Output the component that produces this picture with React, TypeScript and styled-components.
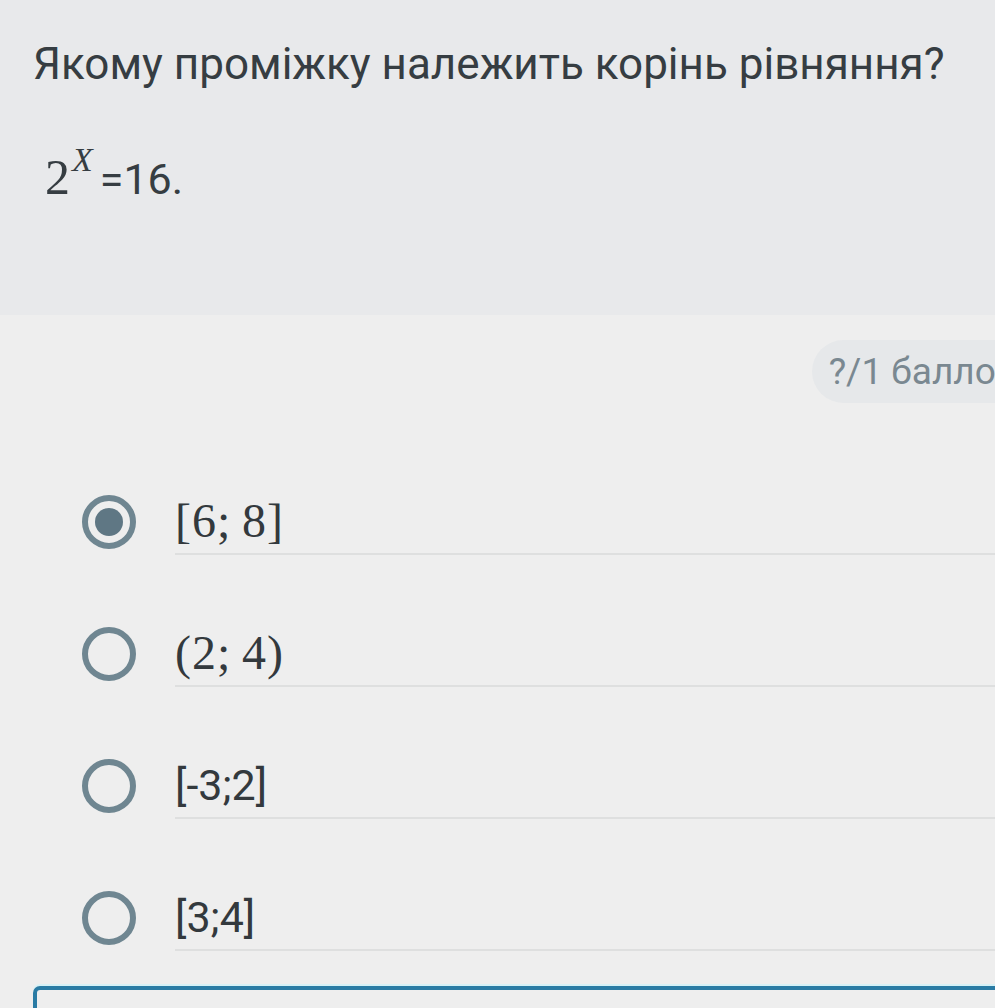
import { createGlobalStyle } from "styled-components";
import styled from "styled-components";

const GlobalStyle = createGlobalStyle`
  html, body {
    margin: 0;
    padding: 0;
    background: #eeeeee;
    overflow: hidden;
  }
  body {
    font-family: Roboto, "Liberation Sans", sans-serif;
    color: #363d42;
  }
`;

const options = [
  { label: "[6;\u20098]", math: true, checked: true },
  { label: "(2;\u20094)", math: true, checked: false },
  { label: "[-3;2]", math: false, checked: false },
  { label: "[3;4]", math: false, checked: false },
];

export default function App() {
  return (
    <Page>
      <GlobalStyle />
      <Header>
        <Title>Якому проміжку належить корінь рівняння?</Title>
        <Equation>
          <MathNum>2</MathNum>
          <MathSup>X</MathSup>
          <span>=16.</span>
        </Equation>
      </Header>

      <ScoreRow>
        <ScorePill>?/1 баллов</ScorePill>
      </ScoreRow>

      <Options>
        {options.map((o, i) => (
          <OptionRow key={i}>
            <Radio $checked={o.checked} />
            <OptionLabel $math={o.math}>{o.label}</OptionLabel>
          </OptionRow>
        ))}
      </Options>

      <AnswerBox />
    </Page>
  );
}

const Page = styled.div`
  display: flex;
  flex-direction: column;
  width: 100%;
  min-height: 1008px;
`;

const Header = styled.div`
  box-sizing: border-box;
  height: 315px;
  padding: 39px 33px 0;
  background: #e8e9eb;
`;

const Title = styled.h1`
  margin: 0;
  font-size: 44px;
  font-weight: 400;
  line-height: 50px;
  color: #363d42;
  white-space: nowrap;
`;

const Equation = styled.div`
  margin-top: 54px;
  padding-left: 12px;
  font-size: 43px;
  line-height: 60px;
  height: 60px;
  white-space: nowrap;
`;

const MathNum = styled.span`
  font-family: "Liberation Serif", "DejaVu Serif", serif;
  font-size: 50px;
  line-height: 1;
`;

const MathSup = styled.span`
  font-family: "Liberation Serif", "DejaVu Serif", serif;
  font-style: italic;
  font-size: 34px;
  line-height: 1;
  vertical-align: 23px;
  margin: 0 7px 0 2px;
`;

const ScoreRow = styled.div`
  display: flex;
  justify-content: flex-end;
  margin-top: 25px;
`;

const ScorePill = styled.div`
  flex-shrink: 0;
  height: 63px;
  line-height: 63px;
  padding: 0 40px 0 17px;
  margin-right: -62px;
  border-radius: 32px;
  background: #e6e8ea;
  color: #7a8891;
  font-size: 37px;
  white-space: nowrap;
`;

const Options = styled.div`
  display: flex;
  flex-direction: column;
  margin-top: 86px;
`;

const OptionRow = styled.div`
  display: flex;
  align-items: center;
  height: 66px;
  margin-bottom: 66px;
  &:last-child {
    margin-bottom: 0;
  }
`;

const Radio = styled.div<{ $checked: boolean }>`
  box-sizing: border-box;
  flex-shrink: 0;
  width: 54px;
  height: 54px;
  margin: 0 39px 0 82px;
  border: 6px solid #6f8691;
  border-radius: 50%;
  display: flex;
  align-items: center;
  justify-content: center;
  &::after {
    content: "";
    display: ${(p) => (p.$checked ? "block" : "none")};
    width: 28px;
    height: 28px;
    border-radius: 50%;
    background: #5f7784;
  }
`;

const OptionLabel = styled.div<{ $math: boolean }>`
  flex: 1;
  box-sizing: border-box;
  height: 66px;
  line-height: 64px;
  border-bottom: 2px solid #dedfdf;
  white-space: nowrap;
  color: #33393d;
  font-family: ${(p) =>
    p.$math ? `"Liberation Serif", "DejaVu Serif", serif` : `Roboto, "Liberation Sans", sans-serif`};
  font-size: ${(p) => (p.$math ? "48px" : "43px")};
  letter-spacing: ${(p) => (p.$math ? "1px" : "0")};
`;

const AnswerBox = styled.div`
  box-sizing: border-box;
  height: 60px;
  margin: 35px -20px 0 33px;
  border: 4px solid #2a7ba4;
  border-radius: 7px;
  box-shadow: 0 -2px 0 #d6f1f6;
`;
